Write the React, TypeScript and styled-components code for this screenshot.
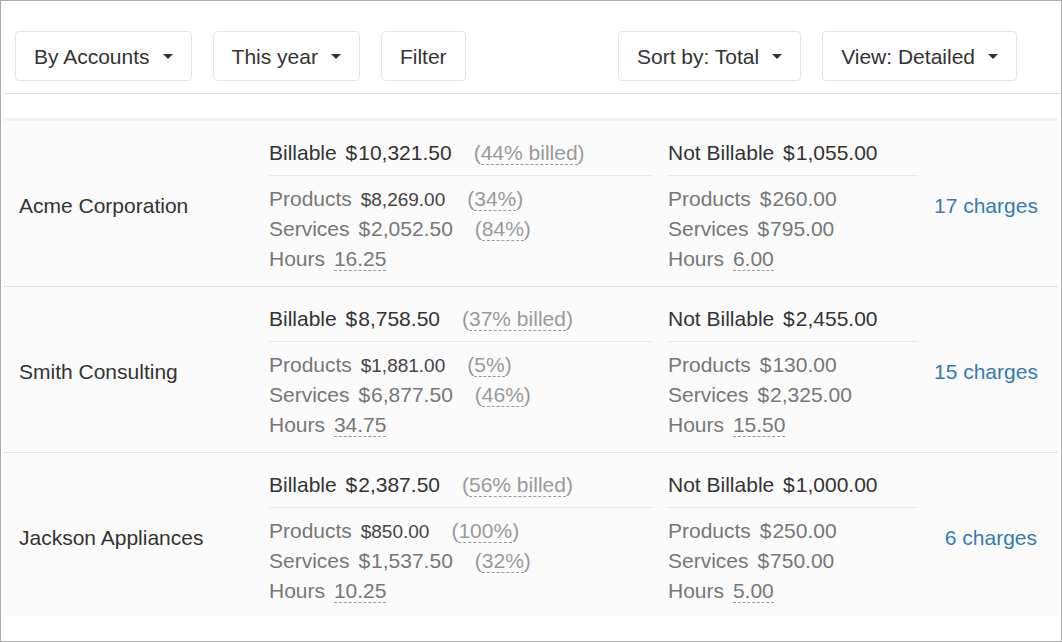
import styled, { createGlobalStyle } from "styled-components";

interface Part {
  label: string;
  amount: string;
  tight?: boolean;
  pct?: string;
}

interface Account {
  name: string;
  billable: string;
  billedPct: string;
  notBillable: string;
  billParts: Part[];
  billHours: string;
  nbParts: Part[];
  nbHours: string;
  charges: number;
}

const accounts: Account[] = [
  {
    name: "Acme Corporation",
    billable: "10,321.50",
    billedPct: "44% billed",
    notBillable: "1,055.00",
    billParts: [
      { label: "Products", amount: "8,269.00", tight: true, pct: "34%" },
      { label: "Services", amount: "2,052.50", pct: "84%" },
    ],
    billHours: "16.25",
    nbParts: [
      { label: "Products", amount: "260.00" },
      { label: "Services", amount: "795.00" },
    ],
    nbHours: "6.00",
    charges: 17,
  },
  {
    name: "Smith Consulting",
    billable: "8,758.50",
    billedPct: "37% billed",
    notBillable: "2,455.00",
    billParts: [
      { label: "Products", amount: "1,881.00", tight: true, pct: "5%" },
      { label: "Services", amount: "6,877.50", pct: "46%" },
    ],
    billHours: "34.75",
    nbParts: [
      { label: "Products", amount: "130.00" },
      { label: "Services", amount: "2,325.00" },
    ],
    nbHours: "15.50",
    charges: 15,
  },
  {
    name: "Jackson Appliances",
    billable: "2,387.50",
    billedPct: "56% billed",
    notBillable: "1,000.00",
    billParts: [
      { label: "Products", amount: "850.00", tight: true, pct: "100%" },
      { label: "Services", amount: "1,537.50", pct: "32%" },
    ],
    billHours: "10.25",
    nbParts: [
      { label: "Products", amount: "250.00" },
      { label: "Services", amount: "750.00" },
    ],
    nbHours: "5.00",
    charges: 6,
  },
];

const GlobalStyle = createGlobalStyle`
  body {
    margin: 0;
    font-family: "Liberation Sans", Arial, sans-serif;
    color: #333;
    background: #fff;
  }
`;

const Frame = styled.div`
  width: 1062px;
  height: 642px;
  box-sizing: border-box;
  border: 1px solid #ababab;
  overflow: hidden;
`;

const Toolbar = styled.div`
  display: flex;
  align-items: center;
  gap: 21px;
  margin-left: 3px;
  padding: 30px 44px 12px 11px;
  border-bottom: 1px solid #e3e3e3;
`;

const Spacer = styled.div`
  flex: 1;
`;

const Button = styled.button`
  display: flex;
  align-items: center;
  height: 50px;
  box-sizing: border-box;
  padding: 1px 18px 0;
  background: #fff;
  border: 1px solid #e6e6e6;
  border-radius: 4px;
  font-family: inherit;
  font-size: 21px;
  color: #333;
  white-space: nowrap;
  cursor: pointer;
`;

const Caret = styled.span`
  display: inline-block;
  width: 0;
  height: 0;
  margin-left: 13px;
  border-top: 5px solid #333;
  border-left: 5px solid transparent;
  border-right: 5px solid transparent;
`;

const List = styled.div`
  margin: 24px 3px 0;
  background: #fbfbfb;
  border-top: 3px solid #f3f3f3;
`;

const Row = styled.div`
  display: flex;
  align-items: center;
  gap: 16px;
  padding: 17px 21px 12px 15px;
  border-bottom: 1px solid #e3e3e3;

  &:last-child {
    border-bottom: none;
    padding-bottom: 10px;
  }
`;

const Name = styled.div`
  flex: 0 0 234px;
  font-size: 21px;
  color: #333;
`;

const Section = styled.div<{ $width: number }>`
  flex: 0 0 ${(p) => p.$width}px;
  font-size: 21px;
`;

const Head = styled.div`
  line-height: 30px;
  padding-bottom: 7px;
  margin-bottom: 8px;
  border-bottom: 1px solid #e8e8e8;
  color: #333;
  white-space: nowrap;
`;

const Line = styled.div`
  line-height: 30px;
  color: #777;
  white-space: nowrap;
`;

const Label = styled.span`
  margin-right: 3px;
`;

const Currency = styled.span`
  margin-right: 1px;
`;

const Tight = styled.span`
  font-size: 19px;
  line-height: 1;
  color: #444;
`;

const Pct = styled.span`
  margin-left: 22px;
  color: #9a9a9a;
`;

const Dotted = styled.span`
  border-bottom: 1px dashed #9a9a9a;
`;

const Charges = styled.a`
  flex: 1;
  min-width: 0;
  text-align: right;
  white-space: nowrap;
  font-size: 21px;
  color: #337ab7;
  text-decoration: none;
  cursor: pointer;
`;

function Money({ amount }: { amount: string }) {
  return (
    <>
      <Currency>$</Currency>
      {amount}
    </>
  );
}

function PartLine({ part }: { part: Part }) {
  return (
    <Line>
      <Label>{part.label}</Label>{" "}
      {part.tight ? <Tight>${part.amount}</Tight> : <Money amount={part.amount} />}
      {part.pct && (
        <Pct>
          (<Dotted>{part.pct}</Dotted>)
        </Pct>
      )}
    </Line>
  );
}

function HoursLine({ hours }: { hours: string }) {
  return (
    <Line>
      <Label>Hours</Label> <Dotted>{hours}</Dotted>
    </Line>
  );
}

export default function App() {
  return (
    <>
      <GlobalStyle />
      <Frame>
        <Toolbar>
          <Button>
            By Accounts <Caret />
          </Button>
          <Button>
            This year <Caret />
          </Button>
          <Button>Filter</Button>
          <Spacer />
          <Button>
            Sort by: Total <Caret />
          </Button>
          <Button>
            View: Detailed <Caret />
          </Button>
        </Toolbar>
        <List>
          {accounts.map((a) => (
            <Row key={a.name}>
              <Name>{a.name}</Name>
              <Section $width={383}>
                <Head>
                  <Label>Billable</Label> <Money amount={a.billable} />
                  <Pct>
                    (<Dotted>{a.billedPct}</Dotted>)
                  </Pct>
                </Head>
                {a.billParts.map((p) => (
                  <PartLine key={p.label} part={p} />
                ))}
                <HoursLine hours={a.billHours} />
              </Section>
              <Section $width={250}>
                <Head>
                  <Label>Not Billable</Label> <Money amount={a.notBillable} />
                </Head>
                {a.nbParts.map((p) => (
                  <PartLine key={p.label} part={p} />
                ))}
                <HoursLine hours={a.nbHours} />
              </Section>
              <Charges>{a.charges} charges</Charges>
            </Row>
          ))}
        </List>
      </Frame>
    </>
  );
}
